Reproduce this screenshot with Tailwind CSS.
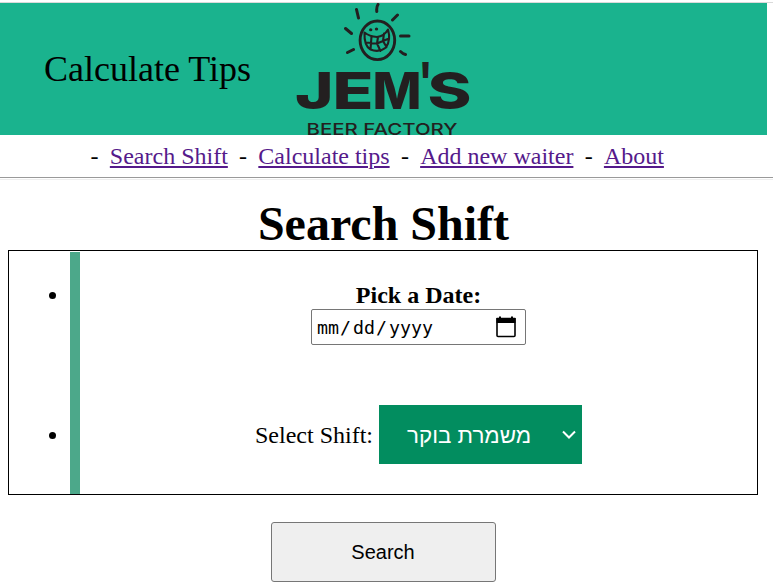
<!DOCTYPE html>
<html lang="en">
<head>
<meta charset="utf-8">
<title>Calculate Tips</title>
<script src="https://cdn.jsdelivr.net/npm/@tailwindcss/browser@4"></script>
</head>
<body class="bg-white text-black font-['Liberation_Serif',serif] text-[24px] overflow-hidden">
<div class="w-[773px] h-[586px] flex flex-col">
  <div class="h-[3px] border-b border-[#dadada] shrink-0"></div>
  <header class="w-[767px] h-[132px] bg-[#1ab38e] flex shrink-0 overflow-hidden">
    <div class="w-[280px] pl-[44px] pt-[45px] text-[36px] leading-[42px] whitespace-nowrap">Calculate Tips</div>
    <svg class="w-[210px] h-[132px] shrink-0" viewBox="280 3 210 132" fill="none" stroke="#231f20" stroke-linecap="round" stroke-linejoin="round">
      <!-- rays -->
      <path stroke-width="3" d="M378 4.500Q376.300 7 376.800 11.500M356.500 9.500L358.500 18M397.500 15L392.500 20M345.500 28.500L351.500 33.500M400.500 36H409M347.500 52.500L353.500 49.500M400.500 51.500Q403 54 405.500 54.500"/>
      <!-- smiling face -->
      <ellipse cx="377.400" cy="40.300" rx="17.300" ry="19.300" stroke-width="2.900"/>
      <path stroke-width="2.100" d="M364.500 32.500Q364 46 370.500 49.500Q379 53 386 47.500Q391 40 388 29.500Q384 36.500 377 37Q369.500 36.500 364.500 32.500ZM371.500 36.500L370.500 49.500M378 37L377 43.500L380.500 51M366 42.500L377 43.500L389 38.500M384 33.500L383 41L386.500 47"/>
      <g fill="#231f20" stroke="none"><ellipse cx="370.700" cy="29.700" rx="1.700" ry="1.500"/><ellipse cx="376.500" cy="29" rx="1.700" ry="1.500"/></g>
      <g fill="#231f20" stroke="none" font-family="Inter, sans-serif">
        <text y="109" font-size="51" font-weight="800"><tspan x="295" textLength="38.500" lengthAdjust="spacingAndGlyphs">J</tspan><tspan x="332.500" textLength="41" lengthAdjust="spacingAndGlyphs">E</tspan><tspan x="372.500" textLength="49" lengthAdjust="spacingAndGlyphs">M</tspan><tspan x="418.500" y="98.500" textLength="14" lengthAdjust="spacingAndGlyphs">'</tspan><tspan x="427.500" y="109" textLength="44" lengthAdjust="spacingAndGlyphs">S</tspan></text>
        <text x="306.500" y="135" font-size="16.500" font-weight="500" textLength="151" lengthAdjust="spacingAndGlyphs">BEER FACTORY</text>
      </g>
    </svg>
  </header>
  <nav class="h-[42px] shrink-0 pl-[90.600px] pt-[8px] leading-[27px] flex gap-[11.250px] whitespace-nowrap">
    <span>-</span><a class="text-[#551a8b] underline decoration-2 underline-offset-2">Search Shift</a>
    <span>-</span><a class="text-[#551a8b] underline decoration-2 underline-offset-2">Calculate tips</a>
    <span>-</span><a class="text-[#551a8b] underline decoration-2 underline-offset-2">Add new waiter</a>
    <span>-</span><a class="text-[#551a8b] underline decoration-2 underline-offset-2">About</a>
  </nav>
  <div class="h-[3px] shrink-0 border-t border-t-[#9a9a9a] border-b border-b-[#eeeeee]"></div>
  <h1 class="h-[70px] shrink-0 pt-[16px] w-[767px] text-center text-[48px] leading-[55px] font-bold">Search Shift</h1>
  <main class="ml-[8px] w-[750px] h-[245px] shrink-0 border border-black pt-px flex">
    <div class="w-[61px] pl-[40px] pt-[40px] flex flex-col gap-[133px]">
      <i class="block size-[7px] rounded-full bg-black"></i>
      <i class="block size-[7px] rounded-full bg-black"></i>
    </div>
    <div class="flex-1 border-l-[10px] border-[#4ca88a] pt-[30px] flex flex-col items-center">
      <label class="font-bold leading-[27px]">Pick a Date:</label>
      <div class="w-[215px] h-[36px] border border-[#767676] rounded-[2px] pl-[4px] pr-[8px] flex items-center justify-between font-['DejaVu_Sans_Mono',monospace] text-[18.270px]">
        <div class="flex pt-[2px]"><span class="px-px">mm</span><span>/</span><span class="px-px ml-[1px]">dd</span><span>/</span><span class="px-px ml-[1px]">yyyy</span></div>
        <svg class="w-[22px] h-[22px]" viewBox="0 0 22 22"><path d="M2 2.500H20V19.500Q20 20.500 19 20.500H3Q2 20.500 2 19.500Z" fill="none" stroke="#000" stroke-width="1.600" stroke-linejoin="round"/><path d="M1.500 2H20.500V7H1.500ZM4 .5H6V3H4ZM16 .5H18V3H16Z"/></svg>
      </div>
      <div class="mt-[60px] flex items-center gap-[6px]">
        <label class="leading-[27px] pt-[2px]">Select Shift:</label>
        <div class="w-[203px] h-[59px] bg-[#028d5f] text-white flex items-center justify-between pl-[28px] pr-[6px] font-['Liberation_Sans',sans-serif] text-[22.400px]">
          <span dir="rtl" lang="he" class="pt-[2px] whitespace-nowrap">משמרת בוקר</span>
          <svg class="w-[14px] h-[10px]" viewBox="0 0 14 10"><path d="M1 1.500L7 7.500L13 1.500" fill="none" stroke="#fff" stroke-width="2"/></svg>
        </div>
      </div>
    </div>
  </main>
  <button class="ml-[271px] mt-[27px] w-[225px] h-[60px] shrink-0 bg-[#efefef] border border-[#767676] rounded-[3px] pr-px font-['Liberation_Sans',sans-serif] text-[20px]">Search</button>
</div>
</body>
</html>
